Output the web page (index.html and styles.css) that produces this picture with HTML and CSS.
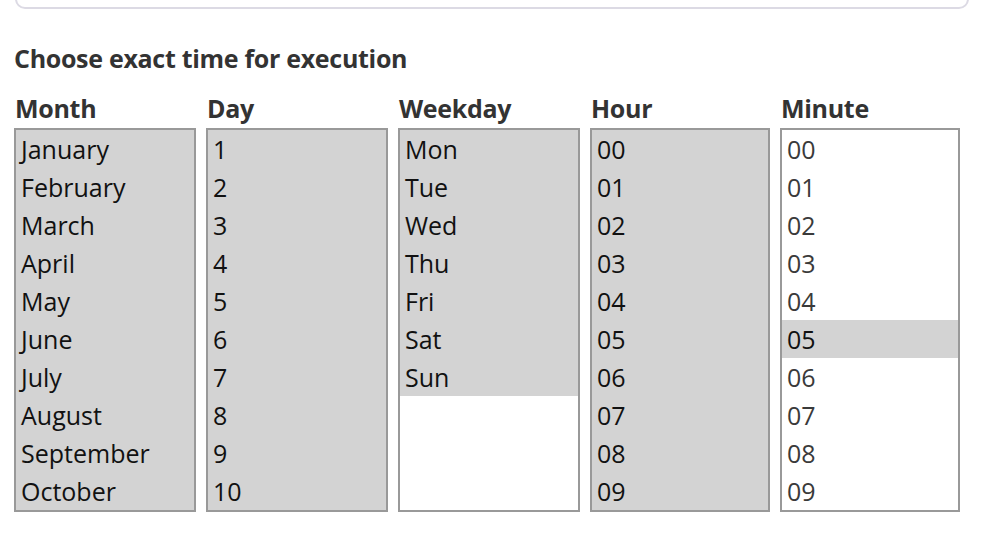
FILE: index.html
```html
<!DOCTYPE html>
<html>
<head>
<meta charset="utf-8">
<link rel="stylesheet" href="styles.css">
</head>
<body>
<div class="card"></div>
<h2 class="title">Choose exact time for execution</h2>
<div class="cols">
  <div class="col w182">
    <div class="label">Month</div>
    <div class="list">
      <div class="opt sel">January</div>
      <div class="opt sel">February</div>
      <div class="opt sel">March</div>
      <div class="opt sel">April</div>
      <div class="opt sel">May</div>
      <div class="opt sel">June</div>
      <div class="opt sel">July</div>
      <div class="opt sel">August</div>
      <div class="opt sel">September</div>
      <div class="opt sel">October</div>
    </div>
  </div>
  <div class="col w182">
    <div class="label">Day</div>
    <div class="list">
      <div class="opt sel">1</div>
      <div class="opt sel">2</div>
      <div class="opt sel">3</div>
      <div class="opt sel">4</div>
      <div class="opt sel">5</div>
      <div class="opt sel">6</div>
      <div class="opt sel">7</div>
      <div class="opt sel">8</div>
      <div class="opt sel">9</div>
      <div class="opt sel">10</div>
    </div>
  </div>
  <div class="col w182">
    <div class="label">Weekday</div>
    <div class="list">
      <div class="opt sel">Mon</div>
      <div class="opt sel">Tue</div>
      <div class="opt sel">Wed</div>
      <div class="opt sel">Thu</div>
      <div class="opt sel">Fri</div>
      <div class="opt sel">Sat</div>
      <div class="opt sel">Sun</div>
    </div>
  </div>
  <div class="col w180">
    <div class="label">Hour</div>
    <div class="list">
      <div class="opt sel">00</div>
      <div class="opt sel">01</div>
      <div class="opt sel">02</div>
      <div class="opt sel">03</div>
      <div class="opt sel">04</div>
      <div class="opt sel">05</div>
      <div class="opt sel">06</div>
      <div class="opt sel">07</div>
      <div class="opt sel">08</div>
      <div class="opt sel">09</div>
    </div>
  </div>
  <div class="col w180">
    <div class="label">Minute</div>
    <div class="list">
      <div class="opt">00</div>
      <div class="opt">01</div>
      <div class="opt">02</div>
      <div class="opt">03</div>
      <div class="opt">04</div>
      <div class="opt sel">05</div>
      <div class="opt">06</div>
      <div class="opt">07</div>
      <div class="opt">08</div>
      <div class="opt">09</div>
    </div>
  </div>
</div>
</body>
</html>
```
FILE: styles.css
```css
html, body {
  margin: 0;
  padding: 0;
  background: #fff;
}
body {
  font-family: "Open Sans", "Noto Sans", sans-serif;
  color: #333;
  padding: 0 14px;
  overflow: hidden;
}
.card {
  height: 40px;
  margin: -35px 1px 0 1px;
  width: 950px;
  border: 2px solid #dcdae4;
  border-radius: 10px;
}
.title {
  margin: 32px 0 0 0;
  font-size: 25px;
  font-weight: 700;
  line-height: 34px;
  color: #333;
  letter-spacing: -0.3px;
}
.cols {
  display: flex;
  gap: 10px;
  margin-top: 16px;
}
.col {
  display: flex;
  flex-direction: column;
}
.w182 { width: 182px; }
.w180 { width: 180px; }
.label {
  font-size: 25px;
  font-weight: 700;
  line-height: 34px;
  height: 34px;
  letter-spacing: -0.3px;
  color: #333;
  padding-left: 1px;
}
.list {
  margin-top: 3px;
  height: 380px;
  border: 2px solid #999;
  background: #fff;
  overflow: hidden;
}
.opt {
  height: 38px;
  line-height: 38px;
  font-size: 25px;
  padding-left: 5px;
  color: #3a3a3a;
}
.opt.sel {
  background: #d3d3d3;
  color: #111;
}
```
